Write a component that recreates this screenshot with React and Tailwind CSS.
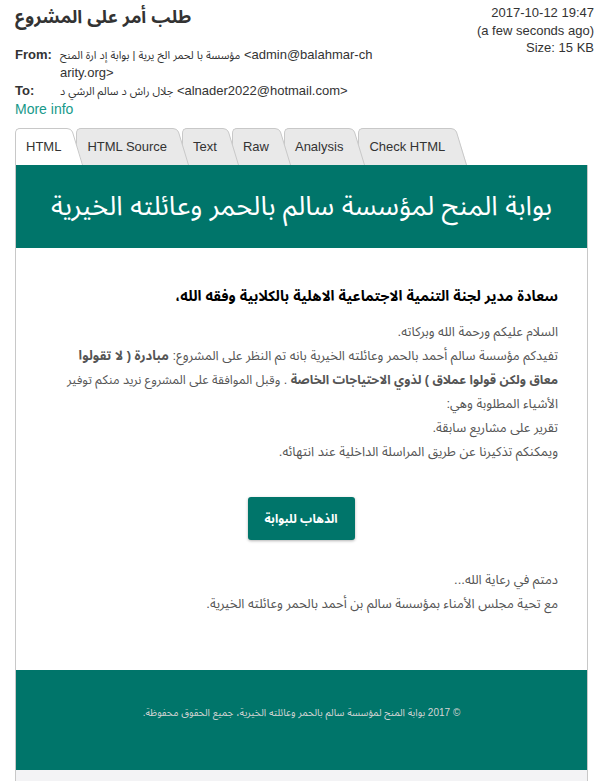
import React from 'react';

const tabs = [
    { label: 'HTML', active: true, z: 'z-[6]' },
    { label: 'HTML Source', z: 'z-[5]' },
    { label: 'Text', z: 'z-[4]' },
    { label: 'Raw', z: 'z-[3]' },
    { label: 'Analysis', z: 'z-[2]' },
    { label: 'Check HTML', z: 'z-[1]' },
];

const Tab = ({ label, active, z, first }) => (
    <div className={`relative flex ${z} ${first ? '' : '-ml-[7px]'}`}>
        <div
            className={`h-[37px] flex items-center pl-[10px] pr-[6px] border-l border-t border-[#c8c8c8] rounded-tl-[5px] text-[13px] text-[#333] ${active ? 'bg-white' : 'bg-[#e9e9e9]'}`}
        >
            {label}
        </div>
        <svg width="16" height="37" className="block shrink-0">
            <path d="M0 0.5 Q4 0.5 5.5 4 L16 37 L0 37 Z" fill={active ? '#ffffff' : '#e9e9e9'} />
            <path d="M0 0.5 Q4 0.5 5.5 4 L15.5 37" fill="none" stroke="#c8c8c8" />
        </svg>
    </div>
);

const App = () => {
    return (
        <div className="min-h-screen bg-white px-[15px] text-[#333] font-['Liberation_Sans','Noto_Sans_Arabic','Noto_Naskh_Arabic','DejaVu_Sans',sans-serif]">
            {/* message header */}
            <div className="flex justify-between">
                <div>
                    <h1 className="mt-[3px] h-[28px] text-[18px] leading-[28px] font-bold text-[#333]">طلب أمر على المشروع</h1>
                    <div className="mt-[15px] text-[13px] leading-[18px]">
                        <div className="flex">
                            <span className="w-[45px] shrink-0 font-bold">From:</span>
                            <div>
                                <div>
                                    <span className="text-[11px]">مؤسسة با لحمر الخ يرية | بوابة إد ارة المنح</span>{' '}
                                    &lt;admin@balahmar-ch
                                </div>
                                <div>arity.org&gt;</div>
                            </div>
                        </div>
                        <div className="flex">
                            <span className="w-[45px] shrink-0 font-bold">To:</span>
                            <span>
                                <span className="text-[11px]">جلال راش د سالم الرشي د</span>{' '}
                                &lt;alnader2022@hotmail.com&gt;
                            </span>
                        </div>
                        <a href="#" className="block text-[14px] text-[#17998a]">More info</a>
                    </div>
                </div>
                <div className="pt-[4px] -mr-[6px] text-right text-[13px] leading-[17.5px]">
                    <div>2017-10-12 19:47</div>
                    <div>(a few seconds ago)</div>
                    <div>Size: 15 KB</div>
                </div>
            </div>

            {/* tabs */}
            <div className="mt-[10px] flex items-end">
                {tabs.map((t, i) => (
                    <Tab key={t.label} {...t} first={i === 0} />
                ))}
            </div>

            {/* message body */}
            <div className="border-x border-[#c8c8c8]">
                <div className="h-[83px] bg-[#00756a] flex items-center justify-center">
                    <h2 dir="rtl" className="text-[27px] text-white">بوابة المنح لمؤسسة سالم بالحمر وعائلته الخيرية</h2>
                </div>

                <div dir="rtl" className="pr-[29px] pl-[34px] pt-[37px] pb-[54px]">
                    <p className="text-[14.5px] leading-[22px] font-bold text-black whitespace-nowrap">
                        سعادة مدير لجنة التنمية الاجتماعية الاهلية بالكلابية وفقه الله،
                    </p>
                    <div className="mt-[13px] text-[13px] leading-[24px] text-[#555] whitespace-nowrap">
                        <p>السلام عليكم ورحمة الله وبركاته.</p>
                        <p>
                            تفيدكم مؤسسة سالم أحمد بالحمر وعائلته الخيرية بانه تم النظر على المشروع: <b>مبادرة ( لا تقولوا</b>
                        </p>
                        <p className="text-[12.5px]">
                            <b>معاق ولكن قولوا عملاق ) لذوي الاحتياجات الخاصة</b> . وقبل الموافقة على المشروع نريد منكم توفير
                        </p>
                        <p>الأشياء المطلوبة وهي:</p>
                        <p>تقرير على مشاريع سابقة.</p>
                        <p>ويمكنكم تذكيرنا عن طريق المراسلة الداخلية عند انتهائه.</p>
                    </div>

                    <div className="mt-[33px] flex justify-center pr-[6px]">
                        <a
                            href="#"
                            className="h-[43px] w-[107px] flex items-center justify-center rounded-[3px] bg-[#00756a] text-[12px] font-bold text-white shadow-[0_1px_3px_rgba(0,0,0,0.3)]"
                        >
                            الذهاب للبوابة
                        </a>
                    </div>

                    <div className="mt-[28px] text-[13px] leading-[24px] text-[#555]">
                        <p>دمتم في رعاية الله...</p>
                        <p>مع تحية مجلس الأمناء بمؤسسة سالم بن أحمد بالحمر وعائلته الخيرية.</p>
                    </div>
                </div>

                <div dir="rtl" className="h-[100px] pt-[35px] bg-[#00756a] text-center text-[10px] leading-[16px] text-[#d4d4d4]">
                    © 2017 بوابة المنح لمؤسسة سالم بالحمر وعائلته الخيرية، جميع الحقوق محفوظة.
                </div>
                <div className="h-[40px] bg-[#f3f3f5]"></div>
            </div>
        </div>
    );
};

export default App;
